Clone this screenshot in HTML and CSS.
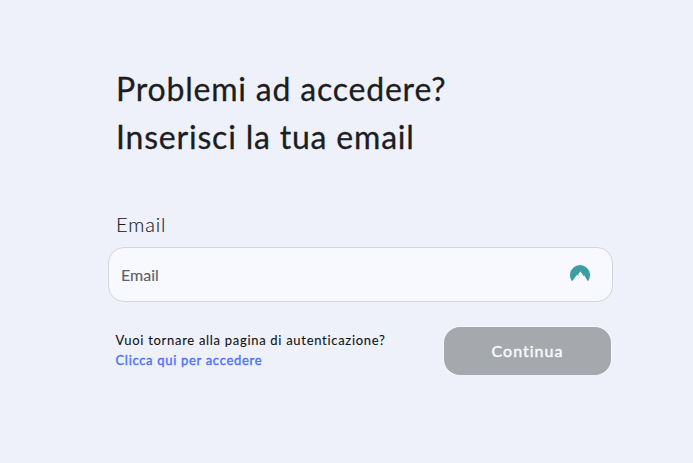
FILE: index.html
```html
<!DOCTYPE html>
<html lang="it">
<head>
<meta charset="utf-8">
<title>Recupero accesso</title>
<link rel="stylesheet" href="styles.css">
</head>
<body>
<main class="recovery">
  <h1 class="title">Problemi ad accedere?<br>Inserisci la tua email</h1>
  <form class="form">
    <label class="label" for="email">Email</label>
    <div class="field">
      <input class="input" id="email" type="email" placeholder="Email">
      <svg class="field-icon" viewBox="0 0 20 20" aria-hidden="true"><path d="M2.1 16.2A10 10 0 1 1 17.9 16.2L14 10 13.2 11.2 12.7 9.7 10.3 6.2 8.2 9.6 9 11 7 9.8 2.1 16.2Z"/></svg>
    </div>
    <div class="actions">
      <p class="hint">Vuoi tornare alla pagina di autenticazione?<br><a class="link" href="#">Clicca qui per accedere</a></p>
      <button class="button" type="button">Continua</button>
    </div>
  </form>
</main>
</body>
</html>
```

FILE: styles.css
```css
* { box-sizing: border-box; }
body { margin: 0; background: #eef1fa; color: #1c1d1e; font-family: Lato, sans-serif; }
.recovery { width: 505px; margin-left: 108px; padding-top: 65px; }
.title { margin: 0 0 0 8px; font-size: 32px; font-weight: 400; line-height: 48px; letter-spacing: .8px; -webkit-text-stroke: .3px; }
.form { margin-top: 49px; }
.label { display: block; margin-left: 8px; font-size: 20px; font-weight: 300; line-height: 28px; letter-spacing: .9px; -webkit-text-stroke: .15px; }
.field { display: flex; align-items: center; height: 55px; margin-top: 9px; padding: 0 22px 0 12px; border: 1px solid #d4d6da; border-radius: 16px; background: #f8f9fe; }
.input { flex: 1; min-width: 0; padding: 0; border: 0; outline: 0; background: none; font: 400 16px Lato, sans-serif; -webkit-text-stroke: .15px; }
.input::placeholder { color: #606166; opacity: 1; }
.field-icon { width: 20px; height: 20px; fill: #3b9ea2; }
.actions { display: flex; justify-content: space-between; margin: 25px 2px 0 7.5px; }
.hint { margin: 3px 0 0; color: #111214; font-size: 13px; line-height: 20px; letter-spacing: .7px; -webkit-text-stroke: .1px; }
.link { color: #4a72f7; letter-spacing: .69px; text-decoration: none; -webkit-text-stroke: .35px; }
.button { width: 167px; height: 48px; padding: 0 0 2px; border: 0; border-radius: 16px; background: #a5a8ac; box-shadow: 0 0 0 1px #f5f7fc; color: #fafbff; font: 400 16px Lato, sans-serif; letter-spacing: 1px; -webkit-text-stroke: .4px; }
```
